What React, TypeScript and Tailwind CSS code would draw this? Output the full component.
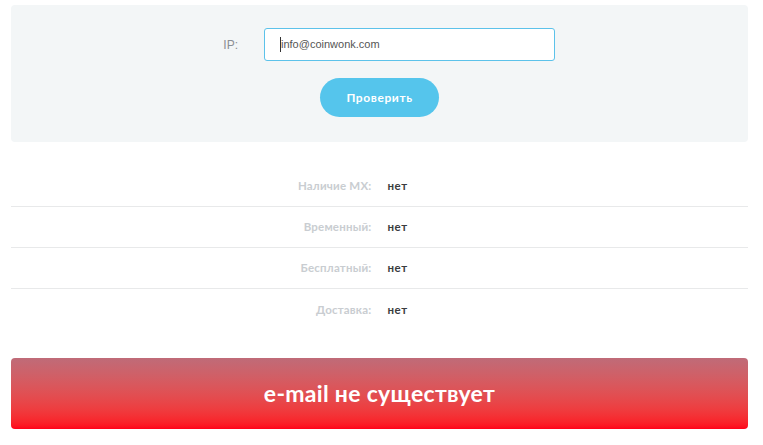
import React from "react";

const rows = [
  { label: "Наличие MX:", value: "нет" },
  { label: "Временный:", value: "нет" },
  { label: "Бесплатный:", value: "нет" },
  { label: "Доставка:", value: "нет" },
];

export default function App() {
  return (
    <div className="w-[763px] h-[445px] bg-white overflow-hidden" style={{ fontFamily: "Lato, 'Open Sans', sans-serif" }}>
      <div className="ml-[11px] w-[737px] pt-[5px]">
        <div className="bg-[#f3f6f7] rounded-[4px] h-[137px] pt-[23px] flex flex-col">
          <div className="flex items-center">
            <div className="w-[227px] text-right text-[12px] text-[#8a8f94]" style={{ fontFamily: "'Liberation Sans', Arial, sans-serif" }}>IP:</div>
            <div className="ml-[26px] w-[291px] h-[33px] bg-white border border-[#5cc2ea] rounded-[3px] flex items-center pl-[15px]">
              <span className="w-px h-[15px] bg-[#333]" />
              <span className="text-[11px] text-[#555]" style={{ fontFamily: "'Liberation Sans', Arial, sans-serif" }}>info@coinwonk.com</span>
            </div>
          </div>
          <div className="flex justify-center mt-[17px]">
            <button className="w-[119px] h-[39px] rounded-full bg-[#55c5ec] text-white text-[12px] font-bold tracking-[0.6px]">Проверить</button>
          </div>
        </div>

        <div className="mt-[24px]">
          {rows.map((r, i) => (
            <div
              key={r.label}
              className={`grid grid-cols-2 gap-x-[16px] h-[41px] items-center text-[11.5px] font-bold ${i < rows.length - 1 ? "border-b border-[#e8e9ea]" : ""}`}
            >
              <div className="text-right text-[#c9cdd1] tracking-[0.2px]">{r.label}</div>
              <div className="text-[#3a3d40] tracking-[0.5px]">{r.value}</div>
            </div>
          ))}
        </div>

        <div className="mt-[28px] h-[71px] rounded-[4px] bg-gradient-to-b from-[#bf6b78] to-[#ff0019] flex items-center justify-center">
          <span className="text-white text-[23px] font-bold tracking-[0.3px]">e-mail не существует</span>
        </div>
      </div>
    </div>
  );
}
